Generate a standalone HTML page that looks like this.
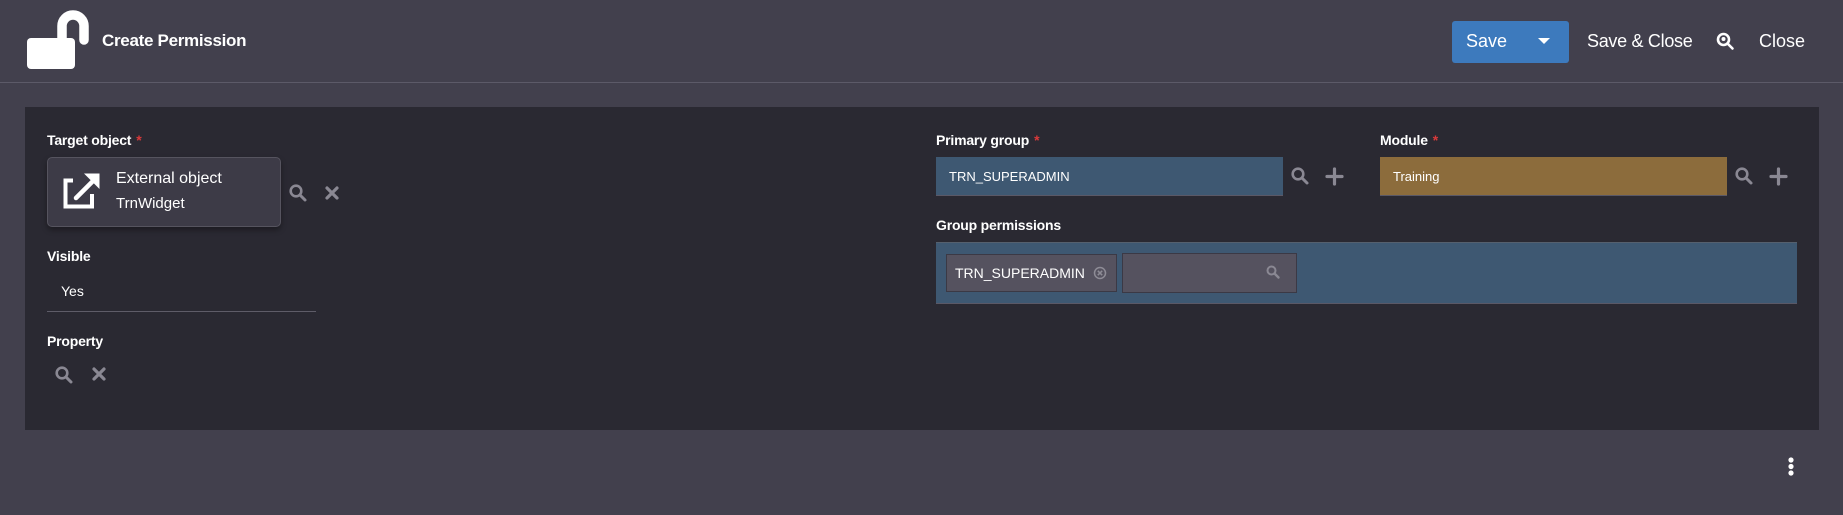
<!DOCTYPE html>
<html><head><meta charset="utf-8"><style>
*{margin:0;padding:0;box-sizing:border-box}
body{width:1843px;height:515px;background:#42404d;font-family:"Liberation Sans",sans-serif;color:#fff;position:relative;overflow:hidden}
.a{position:absolute}
.lbl{position:absolute;font-weight:bold;font-size:14px;color:#fff;letter-spacing:-0.2px}
.lbl i{color:#d9393a;font-style:normal;margin-left:5px}
svg{position:absolute;overflow:visible}
</style></head><body>
<div class="a" style="left:0;top:82px;width:1843px;height:1px;background:#5c5a68"></div>
<!-- lock -->
<svg style="left:27px;top:14px" width="62" height="56" viewBox="0 0 62 56">
<path d="M35 26 V12 a11 11 0 0 1 22 0 V26" fill="none" stroke="#fff" stroke-width="9.5" stroke-linecap="round"/>
<rect x="0" y="24" width="48" height="31" rx="4" fill="#fff"/>
</svg>
<div class="a" style="left:102px;top:31px;font-size:17px;font-weight:bold;letter-spacing:-0.3px">Create Permission</div>
<!-- save -->
<div class="a" style="left:1452px;top:21px;width:117px;height:42px;background:#3d7abd;border-radius:3px"></div>
<div class="a" style="left:1466px;top:31px;font-size:18px">Save</div>
<svg style="left:1538px;top:38px" width="12" height="7"><path d="M0 0 H12 L6 6Z" fill="#fff"/></svg>
<div class="a" style="left:1587px;top:31px;font-size:18px;letter-spacing:-0.3px">Save &amp; Close</div>
<svg style="left:1716px;top:32px" width="18" height="18" viewBox="0 0 18 18"><circle cx="7.5" cy="7.5" r="5.5" fill="none" stroke="#fff" stroke-width="2.6"/><circle cx="7.5" cy="7" r="2" fill="#fff"/><path d="M11.5 11.5 L16.5 16.5" stroke="#fff" stroke-width="2.6" stroke-linecap="round"/></svg>
<div class="a" style="left:1759px;top:31px;font-size:18px">Close</div>
<!-- panel -->
<div class="a" style="left:25px;top:107px;width:1794px;height:323px;background:#2a2932"></div>
<div class="lbl" style="left:47px;top:132px">Target object<i>*</i></div>
<div class="a" style="left:47px;top:157px;width:234px;height:70px;background:#3d3b47;border:1px solid #56545f;border-radius:5px;box-shadow:0 3px 6px rgba(0,0,0,.35)"></div>
<svg style="left:64px;top:173px" width="36" height="36" viewBox="0 0 36 36"><path d="M9 7.5 H1.5 V33.5 H28 V21" fill="none" stroke="#fff" stroke-width="4"/><path d="M12 25 L30 7" stroke="#fff" stroke-width="4.5" stroke-linecap="round"/><path d="M20 0.5 H35.5 V16Z" fill="#fff"/></svg>
<div class="a" style="left:116px;top:170px;font-size:16px">External object</div>
<div class="a" style="left:116px;top:195px;font-size:15px">TrnWidget</div>
<svg style="left:289px;top:184px" width="18" height="17" viewBox="0 0 18 17"><circle cx="7" cy="7" r="5.3" fill="none" stroke="#8a8893" stroke-width="2.6"/><path d="M11 11 L16 16" stroke="#8a8893" stroke-width="3" stroke-linecap="round"/></svg>
<svg style="left:325px;top:186px" width="14" height="14"><path d="M2 2 L12 12 M12 2 L2 12" stroke="#8a8893" stroke-width="3.2" stroke-linecap="round"/></svg>
<div class="lbl" style="left:47px;top:248px">Visible</div>
<div class="a" style="left:61px;top:283px;font-size:14px">Yes</div>
<div class="a" style="left:47px;top:311px;width:269px;height:1px;background:#5e5c68"></div>
<div class="lbl" style="left:47px;top:333px">Property</div>
<svg style="left:55px;top:366px" width="18" height="17" viewBox="0 0 18 17"><circle cx="7" cy="7" r="5.3" fill="none" stroke="#8a8893" stroke-width="2.6"/><path d="M11 11 L16 16" stroke="#8a8893" stroke-width="3" stroke-linecap="round"/></svg>
<svg style="left:92px;top:367px" width="14" height="14"><path d="M2 2 L12 12 M12 2 L2 12" stroke="#8a8893" stroke-width="3.2" stroke-linecap="round"/></svg>
<!-- primary group -->
<div class="lbl" style="left:936px;top:132px">Primary group<i>*</i></div>
<div class="a" style="left:936px;top:157px;width:347px;height:39px;background:#3e5872;border-bottom:1px solid #5a5866"></div>
<div class="a" style="left:949px;top:169px;font-size:13px">TRN_SUPERADMIN</div>
<svg style="left:1291px;top:167px" width="18" height="17" viewBox="0 0 18 17"><circle cx="7" cy="7" r="5.3" fill="none" stroke="#8a8893" stroke-width="2.6"/><path d="M11 11 L16 16" stroke="#8a8893" stroke-width="3" stroke-linecap="round"/></svg>
<svg style="left:1326px;top:168px" width="17" height="17"><path d="M8.5 1 V16 M1 8.5 H16" stroke="#8a8893" stroke-width="3.2" stroke-linecap="round"/></svg>
<!-- module -->
<div class="lbl" style="left:1380px;top:132px">Module<i>*</i></div>
<div class="a" style="left:1380px;top:157px;width:347px;height:39px;background:#8c6c3c;border-bottom:1px solid #5a5866"></div>
<div class="a" style="left:1393px;top:169px;font-size:13px">Training</div>
<svg style="left:1735px;top:167px" width="18" height="17" viewBox="0 0 18 17"><circle cx="7" cy="7" r="5.3" fill="none" stroke="#8a8893" stroke-width="2.6"/><path d="M11 11 L16 16" stroke="#8a8893" stroke-width="3" stroke-linecap="round"/></svg>
<svg style="left:1770px;top:168px" width="17" height="17"><path d="M8.5 1 V16 M1 8.5 H16" stroke="#8a8893" stroke-width="3.2" stroke-linecap="round"/></svg>
<!-- group permissions -->
<div class="lbl" style="left:936px;top:217px">Group permissions</div>
<div class="a" style="left:936px;top:242px;width:861px;height:62px;background:#3e5872;border-top:1px solid #55606e;border-bottom:1px solid #5a5866"></div>
<div class="a" style="left:946px;top:254px;width:171px;height:38px;background:#55525f;border:1px solid #3b3945"></div>
<div class="a" style="left:955px;top:265px;font-size:14px">TRN_SUPERADMIN</div>
<svg style="left:1093px;top:266px" width="14" height="14"><circle cx="7" cy="7" r="5.5" fill="none" stroke="#8e8c96" stroke-width="1.5"/><path d="M4.8 4.8 L9.2 9.2 M9.2 4.8 L4.8 9.2" stroke="#8e8c96" stroke-width="1.5"/></svg>
<div class="a" style="left:1122px;top:253px;width:175px;height:40px;background:#55525f;border:1px solid #3b3945"></div>
<svg style="left:1266px;top:265px" width="14" height="14" viewBox="0 0 14 14"><circle cx="5.5" cy="5.5" r="4" fill="none" stroke="#8a8893" stroke-width="2"/><path d="M8.5 8.5 L12.5 12.5" stroke="#8a8893" stroke-width="2.4" stroke-linecap="round"/></svg>
<!-- kebab -->
<svg style="left:1786px;top:457px" width="10" height="20"><circle cx="5" cy="3" r="2.6" fill="#fff"/><circle cx="5" cy="9.5" r="2.6" fill="#fff"/><circle cx="5" cy="16" r="2.6" fill="#fff"/></svg>
</body></html>
